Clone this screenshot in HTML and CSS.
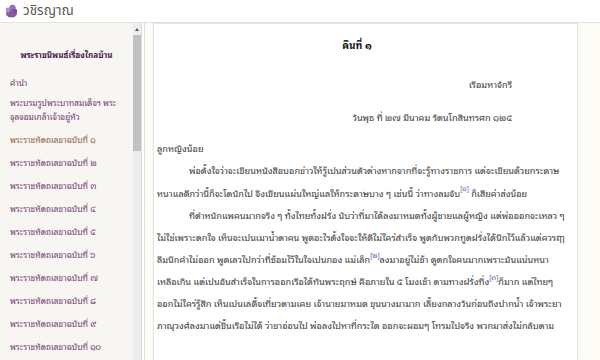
FILE: index.html
```html
<!DOCTYPE html>
<html lang="th">
<head>
<meta charset="utf-8">
<title>วชิรญาณ</title>
<link rel="stylesheet" href="styles.css">
</head>
<body>
<header class="topbar">
  <svg class="logo" width="13" height="14" viewBox="0 0 13 14">
    <circle cx="7.5" cy="4" r="3.2" fill="#9a6bb0"/>
    <ellipse cx="6.5" cy="9.5" rx="5.5" ry="4" fill="#8a58a3"/>
    <circle cx="3" cy="6" r="2.4" fill="#b489c4"/>
    <circle cx="10" cy="7" r="2.2" fill="#7d4c98"/>
  </svg>
  <span class="brand">วชิรญาณ</span>
</header>
<div class="layout">
  <aside class="sidebar">
    <nav class="toc">
      <div class="toc-title">พระราชนิพนธ์เรื่องไกลบ้าน</div>
      <div class="toc-item lead">คำนำ</div>
      <div class="toc-item">พระบรมรูปพระบาทสมเด็จฯ พระ<br>จุลจอมเกล้าเจ้าอยู่หัว</div>
      <div class="toc-item active">พระราชหัตถเลขาฉบับที่ ๑</div>
      <div class="toc-item">พระราชหัตถเลขาฉบับที่ ๒</div>
      <div class="toc-item">พระราชหัตถเลขาฉบับที่ ๓</div>
      <div class="toc-item">พระราชหัตถเลขาฉบับที่ ๔</div>
      <div class="toc-item">พระราชหัตถเลขาฉบับที่ ๕</div>
      <div class="toc-item">พระราชหัตถเลขาฉบับที่ ๖</div>
      <div class="toc-item">พระราชหัตถเลขาฉบับที่ ๗</div>
      <div class="toc-item">พระราชหัตถเลขาฉบับที่ ๘</div>
      <div class="toc-item">พระราชหัตถเลขาฉบับที่ ๙</div>
      <div class="toc-item">พระราชหัตถเลขาฉบับที่ ๑๐</div>
      <div class="toc-item">พระราชหัตถเลขาฉบับที่ ๑๑</div>
    </nav>
    <div class="scrollbar">
      <div class="arrow"></div>
      <div class="thumb"></div>
    </div>
  </aside>
  <main class="reader">
    <article class="page">
      <h1 class="night">คืนที่ ๑</h1>
      <p class="right place">เรือมหาจักรี</p>
      <p class="right date">วันพุธ ที่ ๒๗ มีนาคม รัตนโกสินทรศก ๑๒๕</p>
      <p class="salute">ลูกหญิงน้อย</p>
      <p class="para first">พ่อตั้งใจว่าจะเขียนหนังสือบอกข่าวให้รู้เปนส่วนตัวต่างหากจากที่จะรู้ทางราชการ แต่จะเขียนด้วยกระดาษ<br><span class="cont">หนาแลดีกว่านี้ก็จะโตนักไป จึงเขียนแผ่นใหญ่แลให้กระดาษบาง ๆ เช่นนี้ ว่าทางลมจับ<sup class="note">[๑]</sup> ก็เสียค่าส่งน้อย</span></p>
      <p class="para">ที่ตำหนักแพคนมากจริง ๆ ทั้งไทยทั้งฝรั่ง นับว่าที่มาได้ลงมาหมดทั้งผู้ชายแลผู้หญิง แต่พ่อออกจะเหลว ๆ<br><span class="cont">ไม่ใช่เพราะตกใจ เห็นจะเปนเมาน้ำตาคน พูดอะไรตั้งใจจะให้ดีไม่ใคร่สำเร็จ พูดกับพวกทูตฝรั่งได้นึกไว้แล้วแต่ควรฤๅ</span><br><span class="cont">ลืมนึกคำไม่ออก พูดเลวไปกว่าที่ซ้อมไว้ในใจเปนกอง แม่เล็ก<sup class="note">[๒]</sup>ลงมาอยู่ไม่ช้า ดูตกใจคนมากเพราะมันแน่นหนา</span><br><span class="cont">เหลือเกิน แต่เปนอันสำเร็จในการออกเรือได้ทันพระฤกษ์ คือภายใน ๕ โมงเช้า ตามทางฝรั่งที่ง<sup class="note">[๓]</sup>ก็มาก แต่ไทยๆ</span><br><span class="cont">ออกไม่ใคร่รู้สึก เห็นเปนเลดี้จเที่ยวตามเคย เจ้านายมาหมด ขุนนางมามาก เลี้ยงกลางวันก่อนถึงปากน้ำ เจ้าพระยา</span><br><span class="cont">ภาณุวงศ์ลงมาแต่ขึ้นเรือไม่ได้ ว่าขาอ่อนไป พ่อลงไปหาที่กระได ออกจะผอมๆ โทรมไปจริง พวกมาส่งไม่กลับตาม</span></p>
    </article>
  </main>
</div>
</body>
</html>
```
FILE: styles.css
```css
html, body {
  margin: 0;
  padding: 0;
  width: 600px;
  height: 360px;
  overflow: hidden;
  background: #ffffff;
  font-family: "Noto Sans Thai Looped", Tahoma, Loma, Garuda, "Noto Sans Thai", "Noto Sans", "DejaVu Sans", sans-serif;
}

.topbar {
  height: 22px;
  display: flex;
  align-items: center;
  gap: 5px;
  padding-left: 5px;
  border-bottom: 1px solid #e2e2e2;
  background: #ffffff;
}

.logo {
  display: block;
}

.brand {
  font-family: "Noto Sans Thai", "Noto Sans", sans-serif;
  font-size: 13.5px;
  color: #5a5a5a;
  line-height: 22px;
}

.layout {
  display: flex;
  height: 337px;
}

.sidebar {
  width: 141px;
  flex: none;
  display: flex;
  background: #f7f6f2;
  border-right: 1px solid #dcdcdc;
  overflow: hidden;
}

.toc {
  flex: 1;
  min-width: 0;
  padding-top: 24px;
}

.toc-title {
  font-size: 8.2px;
  font-weight: bold;
  color: #4d174f;
  text-align: center;
  line-height: 16px;
  margin-bottom: 5px;
  white-space: nowrap;
}

.toc-item {
  font-size: 8.3px;
  color: #723a73;
  line-height: 14px;
  padding: 4.5px 0 4.5px 10px;
  white-space: nowrap;
}

.toc-item.lead {
  padding-top: 7.5px;
  padding-bottom: 1.5px;
}

.toc-item.active {
  color: #93603c;
}

.scrollbar {
  width: 8px;
  flex: none;
  background: #ededed;
  display: flex;
  flex-direction: column;
  align-items: center;
}

.arrow {
  margin-top: 5px;
  width: 0;
  height: 0;
  border-left: 2.5px solid transparent;
  border-right: 2.5px solid transparent;
  border-bottom: 3px solid #555555;
}

.thumb {
  margin-top: 4px;
  width: 8px;
  height: 116px;
  background: #c1c1c1;
}

.reader {
  flex: 1;
  min-width: 0;
  margin-left: 2px;
  border-left: 1px solid #dedede;
  background: #fdfbf6;
  padding: 0 22px 0 8px;
  display: flex;
}

.page {
  flex: 1;
  min-width: 0;
  background: #ffffff;
  border: 1px solid #e4e4e4;
  border-bottom: none;
  box-shadow: 0 0 2px rgba(0, 0, 0, 0.06);
  padding: 10px 20px 0 3px;
  overflow: hidden;
  font-size: 9.2px;
  color: #3a3a3a;
  line-height: 22px;
}

.night {
  margin: 0;
  font-size: 10px;
  font-weight: bold;
  color: #111111;
  text-align: center;
  line-height: 22px;
}

.page p {
  margin: 0;
  white-space: nowrap;
}

.right {
  text-align: right;
  padding-right: 45px;
}

.page .place {
  margin-top: 17px;
}

.page .date {
  margin-top: 11px;
}

.page .salute {
  margin-top: 10px;
  margin-bottom: 0;
  line-height: 20px;
}

.para {
  text-indent: 32px;
}

.page .first {
  line-height: 23px;
}

.cont {
  display: inline-block;
  text-indent: 0;
}

.note {
  font-size: 6.5px;
  color: #6a4c9c;
  vertical-align: top;
  line-height: 14px;
}
```
